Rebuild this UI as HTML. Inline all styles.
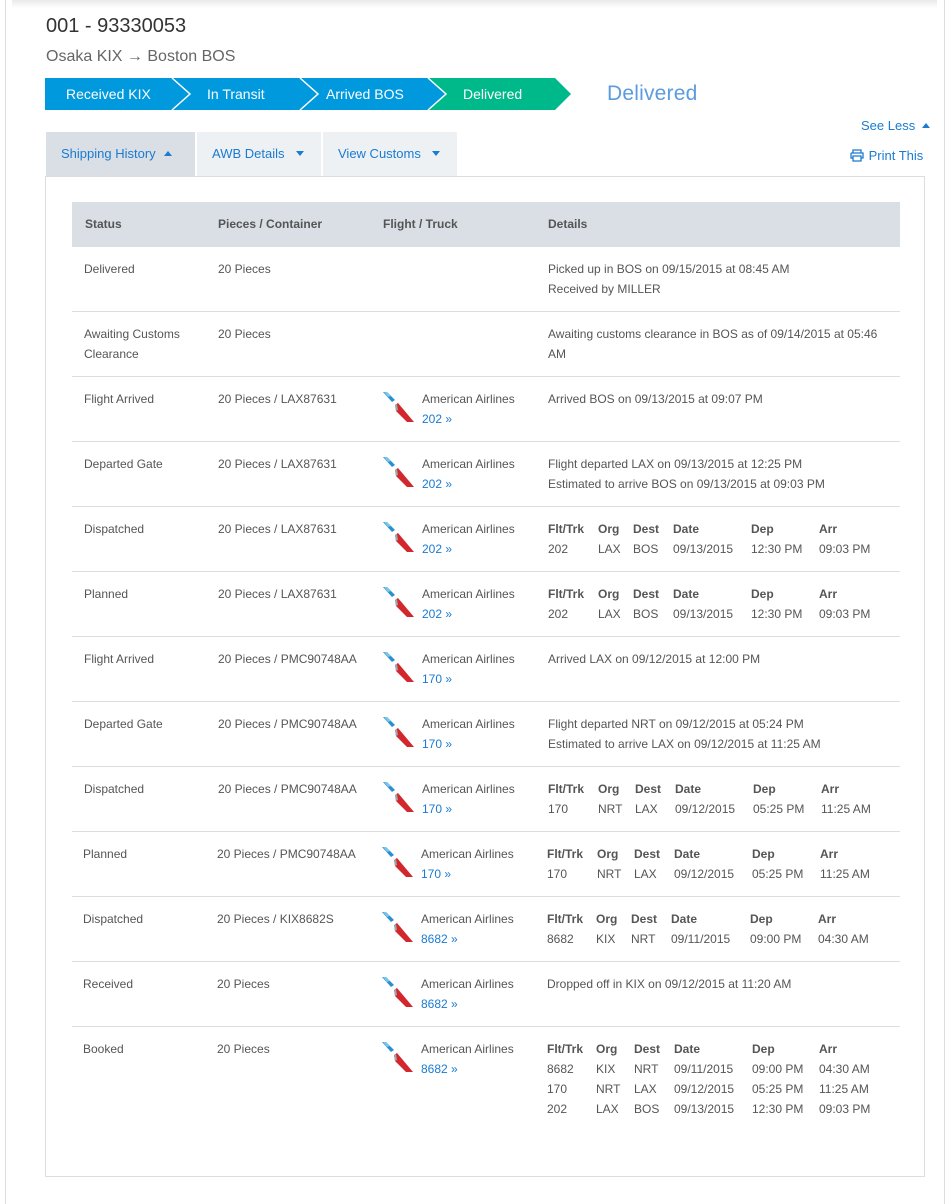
<!DOCTYPE html>
<html><head><meta charset="utf-8"><style>
*{margin:0;padding:0;box-sizing:border-box}
body{width:948px;height:1204px;background:#fff;font-family:"Liberation Sans",Arial,sans-serif;color:#555;position:relative;overflow:hidden;font-size:12px}
.a{position:absolute;white-space:nowrap}
.row{position:absolute;left:72px;width:828px;height:65px;border-bottom:1px solid #ddd}
.row .a{line-height:20px}
.lnk{color:#1a7bd1}
.b{font-weight:bold;color:#555}
.up,.dn{display:inline-block;width:0;height:0;border-left:4px solid transparent;border-right:4px solid transparent;vertical-align:2px}
.up{border-bottom:5px solid #1a7bd1}
.dn{border-top:5px solid #1a7bd1}
</style></head><body>
<div class="a" style="left:5px;top:0;width:1px;height:1204px;background:#ddd"></div>
<div class="a" style="left:944px;top:0;width:1px;height:1204px;background:#ddd"></div>
<div class="a" style="left:12px;top:0;width:925px;height:8px;background:linear-gradient(#eaeaea,#fff)"></div>
<div class="a" style="left:46px;top:15px;font-size:20px;color:#333">001 - 93330053</div>
<div class="a" style="left:46px;top:48px;font-size:16px;color:#666">Osaka KIX → Boston BOS</div>
<svg class="a" style="left:0;top:0" width="600" height="120">
<polygon points="45,78 172,78 190,94 172,110 45,110" fill="#0099dd"/>
<polygon points="172,78 300,78 318,94 300,110 172,110 190,94" fill="#0099dd"/>
<polygon points="300,78 428,78 446,94 428,110 300,110 318,94" fill="#0099dd"/>
<polygon points="428,78 555,78 571,94 555,110 428,110 446,94" fill="#00b98a"/>
<polyline points="172,78 190,94 172,110" fill="none" stroke="#fff" stroke-width="1.5"/>
<polyline points="300,78 318,94 300,110" fill="none" stroke="#fff" stroke-width="1.5"/>
<polyline points="428,78 446,94 428,110" fill="none" stroke="#fff" stroke-width="1.5"/>
</svg>
<div class="a" style="left:66px;top:86px;font-size:14px;color:#fff">Received KIX</div>
<div class="a" style="left:207px;top:86px;font-size:14px;color:#fff">In Transit</div>
<div class="a" style="left:326px;top:86px;font-size:14px;color:#fff">Arrived BOS</div>
<div class="a" style="left:463px;top:86px;font-size:14px;color:#fff">Delivered</div>
<div class="a" style="left:607px;top:82px;font-size:21px;color:#5b9be0;letter-spacing:0.2px">Delivered</div>
<div class="a lnk" style="left:861px;top:118px;font-size:13px">See Less <span class="up" style="margin-left:3px"></span></div>
<div class="a lnk" style="left:849px;top:148px;font-size:13px"><svg width="16" height="13" viewBox="0 0 16 13" style="vertical-align:-2px"><path d="M4 4V1h8v3M2 4h12v5h-2M4 9H2V4M4 7h8v5H4z" fill="none" stroke="#1a7bd1" stroke-width="1.3"/></svg> Print This</div>
<div class="a" style="left:46px;top:132px;width:149px;height:45px;background:#d9dfe5"></div>
<div class="a" style="left:197px;top:132px;width:124px;height:45px;background:#eef1f4"></div>
<div class="a" style="left:323px;top:132px;width:134px;height:45px;background:#eef1f4"></div>
<div class="a lnk" style="left:61px;top:146px;font-size:13px">Shipping History <span class="up" style="margin-left:5px"></span></div>
<div class="a lnk" style="left:212px;top:146px;font-size:13px">AWB Details <span class="dn" style="margin-left:8px"></span></div>
<div class="a lnk" style="left:338px;top:146px;font-size:13px">View Customs <span class="dn" style="margin-left:8px"></span></div>
<div class="a" style="left:45px;top:176px;width:880px;height:1001px;border:1px solid #ddd"></div>
<div class="a" style="left:72px;top:202px;width:828px;height:45px;background:#d9dfe5"></div>
<div class="a b" style="left:85px;top:217px">Status</div>
<div class="a b" style="left:218px;top:217px">Pieces / Container</div>
<div class="a b" style="left:383px;top:217px">Flight / Truck</div>
<div class="a b" style="left:548px;top:217px">Details</div>

<svg width="0" height="0" style="position:absolute"><defs><g id="aa"><polygon points="0,0 4,0 12,8 9,10" fill="#2a8fd0"/><polygon points="1,0 4,0 8,4 5,5" fill="#7cc5ea"/><polygon points="12,13 15,11 31,30 24,30 13,19" fill="#d3272e"/><polygon points="12,13 14,12 15,18 13,19" fill="#9aa"/></g></defs></svg>

<div class="row" style="top:247px"><div class="a" style="left:12px;top:12px">Delivered</div><div class="a" style="left:146px;top:12px">20 Pieces</div><div class="a" style="left:476px;top:12px">Picked up in BOS on 09/15/2015 at 08:45 AM<br>Received by MILLER</div></div>
<div class="row" style="top:312px"><div class="a" style="left:12px;top:12px">Awaiting Customs<br>Clearance</div><div class="a" style="left:146px;top:12px">20 Pieces</div><div class="a" style="left:476px;top:12px">Awaiting customs clearance in BOS as of 09/14/2015 at 05:46<br>AM</div></div>

<div class="row" style="top:377px"><div class="a" style="left:12px;top:12px">Flight Arrived</div><div class="a" style="left:146px;top:12px">20 Pieces / LAX87631</div><svg class="a" style="left:311px;top:15px" width="32" height="31"><use href="#aa"/></svg><div class="a" style="left:350px;top:12px">American Airlines<br><span class="lnk">202 »</span></div><div class="a" style="left:476px;top:12px">Arrived BOS on 09/13/2015 at 09:07 PM</div></div>
<div class="row" style="top:442px"><div class="a" style="left:12px;top:12px">Departed Gate</div><div class="a" style="left:146px;top:12px">20 Pieces / LAX87631</div><svg class="a" style="left:311px;top:15px" width="32" height="31"><use href="#aa"/></svg><div class="a" style="left:350px;top:12px">American Airlines<br><span class="lnk">202 »</span></div><div class="a" style="left:476px;top:12px">Flight departed LAX on 09/13/2015 at 12:25 PM<br>Estimated to arrive BOS on 09/13/2015 at 09:03 PM</div></div>
<div class="row" style="top:507px"><div class="a" style="left:12px;top:12px">Dispatched</div><div class="a" style="left:146px;top:12px">20 Pieces / LAX87631</div><svg class="a" style="left:311px;top:15px" width="32" height="31"><use href="#aa"/></svg><div class="a" style="left:350px;top:12px">American Airlines<br><span class="lnk">202 »</span></div>
<div class="a" style="left:476px;top:12px"><b>Flt/Trk</b><br>202</div><div class="a" style="left:526px;top:12px"><b>Org</b><br>LAX</div><div class="a" style="left:561px;top:12px"><b>Dest</b><br>BOS</div><div class="a" style="left:601px;top:12px"><b>Date</b><br>09/13/2015</div><div class="a" style="left:679px;top:12px"><b>Dep</b><br>12:30 PM</div><div class="a" style="left:747px;top:12px"><b>Arr</b><br>09:03 PM</div></div>
<div class="row" style="top:572px"><div class="a" style="left:12px;top:12px">Planned</div><div class="a" style="left:146px;top:12px">20 Pieces / LAX87631</div><svg class="a" style="left:311px;top:15px" width="32" height="31"><use href="#aa"/></svg><div class="a" style="left:350px;top:12px">American Airlines<br><span class="lnk">202 »</span></div>
<div class="a" style="left:476px;top:12px"><b>Flt/Trk</b><br>202</div><div class="a" style="left:526px;top:12px"><b>Org</b><br>LAX</div><div class="a" style="left:561px;top:12px"><b>Dest</b><br>BOS</div><div class="a" style="left:601px;top:12px"><b>Date</b><br>09/13/2015</div><div class="a" style="left:679px;top:12px"><b>Dep</b><br>12:30 PM</div><div class="a" style="left:747px;top:12px"><b>Arr</b><br>09:03 PM</div></div>
<div class="row" style="top:637px"><div class="a" style="left:12px;top:12px">Flight Arrived</div><div class="a" style="left:146px;top:12px">20 Pieces / PMC90748AA</div><svg class="a" style="left:311px;top:15px" width="32" height="31"><use href="#aa"/></svg><div class="a" style="left:350px;top:12px">American Airlines<br><span class="lnk">170 »</span></div><div class="a" style="left:476px;top:12px">Arrived LAX on 09/12/2015 at 12:00 PM</div></div>
<div class="row" style="top:702px"><div class="a" style="left:12px;top:12px">Departed Gate</div><div class="a" style="left:146px;top:12px">20 Pieces / PMC90748AA</div><svg class="a" style="left:311px;top:15px" width="32" height="31"><use href="#aa"/></svg><div class="a" style="left:350px;top:12px">American Airlines<br><span class="lnk">170 »</span></div><div class="a" style="left:476px;top:12px">Flight departed NRT on 09/12/2015 at 05:24 PM<br>Estimated to arrive LAX on 09/12/2015 at 11:25 AM</div></div>
<div class="row" style="top:767px"><div class="a" style="left:12px;top:12px">Dispatched</div><div class="a" style="left:146px;top:12px">20 Pieces / PMC90748AA</div><svg class="a" style="left:311px;top:15px" width="32" height="31"><use href="#aa"/></svg><div class="a" style="left:350px;top:12px">American Airlines<br><span class="lnk">170 »</span></div>
<div class="a" style="left:476px;top:12px"><b>Flt/Trk</b><br>170</div><div class="a" style="left:526px;top:12px"><b>Org</b><br>NRT</div><div class="a" style="left:563px;top:12px"><b>Dest</b><br>LAX</div><div class="a" style="left:603px;top:12px"><b>Date</b><br>09/12/2015</div><div class="a" style="left:681px;top:12px"><b>Dep</b><br>05:25 PM</div><div class="a" style="left:749px;top:12px"><b>Arr</b><br>11:25 AM</div></div>
<div class="row" style="top:832px"><div class="a" style="left:11px;top:12px">Planned</div><div class="a" style="left:145px;top:12px">20 Pieces / PMC90748AA</div><svg class="a" style="left:310px;top:15px" width="32" height="31"><use href="#aa"/></svg><div class="a" style="left:349px;top:12px">American Airlines<br><span class="lnk">170 »</span></div>
<div class="a" style="left:475px;top:12px"><b>Flt/Trk</b><br>170</div><div class="a" style="left:525px;top:12px"><b>Org</b><br>NRT</div><div class="a" style="left:562px;top:12px"><b>Dest</b><br>LAX</div><div class="a" style="left:602px;top:12px"><b>Date</b><br>09/12/2015</div><div class="a" style="left:680px;top:12px"><b>Dep</b><br>05:25 PM</div><div class="a" style="left:748px;top:12px"><b>Arr</b><br>11:25 AM</div></div>
<div class="row" style="top:897px"><div class="a" style="left:11px;top:12px">Dispatched</div><div class="a" style="left:145px;top:12px">20 Pieces / KIX8682S</div><svg class="a" style="left:310px;top:15px" width="32" height="31"><use href="#aa"/></svg><div class="a" style="left:349px;top:12px">American Airlines<br><span class="lnk">8682 »</span></div>
<div class="a" style="left:475px;top:12px"><b>Flt/Trk</b><br>8682</div><div class="a" style="left:524px;top:12px"><b>Org</b><br>KIX</div><div class="a" style="left:559px;top:12px"><b>Dest</b><br>NRT</div><div class="a" style="left:599px;top:12px"><b>Date</b><br>09/11/2015</div><div class="a" style="left:678px;top:12px"><b>Dep</b><br>09:00 PM</div><div class="a" style="left:746px;top:12px"><b>Arr</b><br>04:30 AM</div></div>
<div class="row" style="top:962px"><div class="a" style="left:11px;top:12px">Received</div><div class="a" style="left:145px;top:12px">20 Pieces</div><svg class="a" style="left:310px;top:15px" width="32" height="31"><use href="#aa"/></svg><div class="a" style="left:349px;top:12px">American Airlines<br><span class="lnk">8682 »</span></div><div class="a" style="left:475px;top:12px">Dropped off in KIX on 09/12/2015 at 11:20 AM</div></div>
<div class="row" style="top:1027px;border-bottom:none;height:100px"><div class="a" style="left:11px;top:12px">Booked</div><div class="a" style="left:145px;top:12px">20 Pieces</div><svg class="a" style="left:310px;top:15px" width="32" height="31"><use href="#aa"/></svg><div class="a" style="left:349px;top:12px">American Airlines<br><span class="lnk">8682 »</span></div>
<div class="a" style="left:475px;top:12px"><b>Flt/Trk</b><br>8682<br>170<br>202</div><div class="a" style="left:524px;top:12px"><b>Org</b><br>KIX<br>NRT<br>LAX</div><div class="a" style="left:562px;top:12px"><b>Dest</b><br>NRT<br>LAX<br>BOS</div><div class="a" style="left:602px;top:12px"><b>Date</b><br>09/11/2015<br>09/12/2015<br>09/13/2015</div><div class="a" style="left:680px;top:12px"><b>Dep</b><br>09:00 PM<br>05:25 PM<br>12:30 PM</div><div class="a" style="left:747px;top:12px"><b>Arr</b><br>04:30 AM<br>11:25 AM<br>09:03 PM</div></div>
</body></html>
